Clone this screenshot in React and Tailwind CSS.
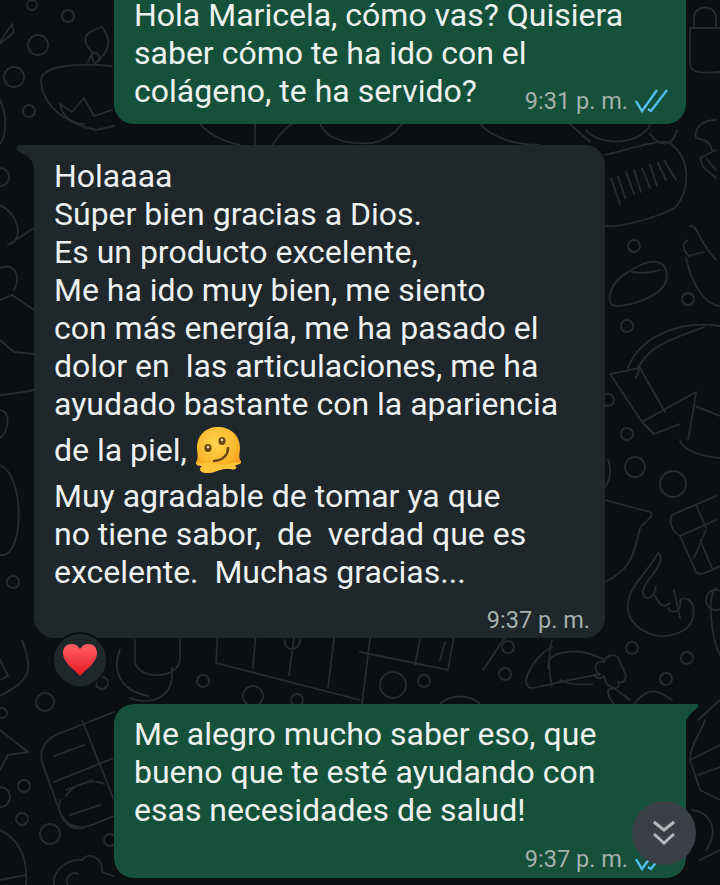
const rings = [
  [32, 5, 5], [38, 45, 10], [14, 77, 10], [68, 16, 6], [29, 111, 6], [0, 177, 9], [2, 713, 5],
  [45, 702, 9], [24, 786, 6], [22, 819, 6], [50, 834, 10], [0, 797, 10], [102, 683, 6], [13, 582, 6],
  [634, 246, 6], [688, 299, 6], [627, 326, 6], [608, 400, 6], [627, 434, 6], [635, 467, 10], [673, 484, 13],
  [632, 648, 6], [687, 658, 6], [666, 679, 6], [203, 681, 6], [253, 696, 10], [393, 685, 13], [424, 681, 6],
  [508, 647, 6], [505, 674, 6], [297, 700, 6], [716, 600, 10], [110, 840, 6],
];

const doodles = [
  // lamp, top left
  "M41 80C42 68 68 62 112 66M41 80C42 106 66 124 96 130L114 126",
  "M92 52C80 40 84 32 102 27C112 40 110 50 97 62C92 66 92 54 92 52Z M88 62C92 50 98 50 100 60",
  "M60 104L72 112M72 112L84 98L94 116M94 116L112 110M60 104C62 116 72 124 84 124",
  "M0 42L12 24L14 32L0 44",
  // left margin shapes
  "M0 100C8 116 6 136 0 144M0 205C20 215 24 240 8 245L34 228M0 268C18 262 20 280 14 290M0 300L12 295L34 310M0 340L14 352L34 354",
  "M0 395C12 394 24 392 34 390M0 410C12 412 8 432 0 438M0 465C26 476 24 560 0 555",
  "M22 640C34 672 30 680 0 696M0 660L8 676L0 680",
  // notebook, bottom left
  "M114 712L58 734C44 740 38 752 43 765L60 812C66 826 78 830 92 825L114 816M82 720L114 800M54 782L114 758M54 756L84 745M66 790L92 780M70 815L100 805",
  "M66 796C72 785 92 778 104 784M60 800C56 815 68 832 84 828M0 730L28 752L8 755L0 770",
  "M0 830C20 840 28 860 26 885M0 880L26 875",
  "M54 885C52 872 66 858 82 860C90 850 104 860 102 872L114 876M68 885C64 878 72 870 78 874",
  // gap between the first bubbles
  "M200 124C210 135 225 142 240 145M255 124V145M292 124C282 130 278 138 272 145M320 124C326 138 345 145 372 143C388 140 396 132 402 124",
  "M480 124C490 135 510 145 540 145M570 124L590 142",
  // comb and bowl, right margin
  "M605 155C620 152 660 138 670 143C692 160 690 190 675 208C655 218 620 228 605 226",
  "M611 178L620 204M618 176L625 198M626 172L634 194M634 170L641 192M642 168L650 188M650 165L657 186M658 163L666 180M664 160L676 180",
  "M586 130C600 147 640 145 650 125M650 134C660 147 672 148 677 130",
  "M703 167L700 158L716 150M703 167L716 178M706 158L716 170",
  "M612 305C606 298 612 284 622 276C640 264 652 258 662 264C670 272 668 284 658 292C644 302 622 308 612 305ZM632 272C644 274 652 272 660 270",
  // finger and flipper
  "M690 226C696 224 700 240 708 250L716 260M688 240C680 245 684 252 690 256M688 256L704 252M686 258C692 285 705 305 720 306",
  "M628 368C640 336 680 320 720 326M638 368C650 345 670 340 704 327M610 374L640 368L665 412M640 368L636 378M610 374L642 422L696 392M696 392C692 420 690 428 688 440M642 422L654 434L680 424M695 406L720 416",
  "M680 440C682 450 700 456 720 458",
  // shirt and rock hand
  "M605 500L650 512C656 516 644 522 640 528C634 556 630 570 605 582",
  "M608 460C612 470 610 480 605 487",
  "M658 553C654 562 642 574 632 590C622 612 630 625 650 634C668 640 690 632 693 618C696 600 686 596 680 600M658 553C664 556 660 566 650 578C640 590 642 598 648 598C654 596 654 594 656 586M655 596C660 606 664 608 670 603M668 608C672 615 682 612 680 600M674 590L680 618",
  // chocolate bar
  "M672 515L716 496M672 515C668 525 674 532 680 536L716 520M696 505L706 528M680 536L696 572C700 576 704 574 720 566M694 558L706 530M700 540L712 568",
  "M716 588C706 596 712 640 720 655",
  // cross and arm
  "M605 660C590 654 585 650 565 652C550 655 548 660 548 668M560 680C570 686 590 684 592 684M600 675C592 668 596 660 604 662C606 654 618 652 620 662C624 672 624 668 624 672C628 678 624 684 618 682C620 688 616 690 610 686C604 684 606 678 604 676C600 680 596 678 594 675",
  "M614 704C606 694 606 688 614 688L630 700M634 704C650 684 660 692 672 700",
  // keyboard strip
  "M218 630L216 663L360 700M256 630L253 668M295 630L289 675M335 630L328 688M371 630L362 704M455 630L448 670M510 630L483 670M285 640C283 652 300 652 300 640M420 640L415 665M445 642L440 660M360 652L448 670",
  "M135 640V660C135 680 178 680 180 660V640M172 668L172 674C172 700 148 705 130 698M120 650C112 668 118 690 148 696",
  "M552 647C540 652 528 670 526 680C526 688 530 690 542 686L570 680L600 674M552 640C548 655 548 670 552 686",
  "M440 704C450 694 470 694 480 704",
  // top-right and bottom-right shapes
  "M694 28V18C694 4 716 4 716 18V28M690 28H720M690 28V64C690 72 700 74 720 72",
  "M716 120C700 120 694 130 696 138C702 140 710 140 712 150",
  "M705 720C700 735 690 745 690 760L700 790L720 800M690 760L720 745M698 775L720 767",
  "M698 720L720 700M692 810C710 812 720 830 706 850",
  "M700 860L720 850",
];

function Doodles() {
  return (
    <svg className="absolute inset-0" width="720" height="885" viewBox="0 0 720 885" fill="none" stroke="#272b30" strokeWidth="1.8" strokeLinecap="round" strokeLinejoin="round">
      {doodles.map((d, i) => (
        <path key={i} d={d} />
      ))}
      {rings.map(([cx, cy, r], i) => (
        <circle key={i} cx={cx} cy={cy} r={r} />
      ))}
    </svg>
  );
}

function MeltingFace() {
  return (
    <svg width="48" height="48" viewBox="0 0 48 48" className="ml-[7px] shrink-0">
      <defs>
        <radialGradient id="face" cx="45%" cy="35%" r="70%">
          <stop offset="0%" stopColor="#ffd44f" />
          <stop offset="65%" stopColor="#fcb72b" />
          <stop offset="100%" stopColor="#ee8c16" />
        </radialGradient>
      </defs>
      <path d="M2 36C5 33 3 26 3 22C3 9 12 1 24 1C36 1 46 9 46 22C46 27 44 32 47 35C48 39 43 38 41 39C44 42 42 44 37 43C30 42 26 44 20 46C14 48 6 47 6 43C6 41 8 41 8 40C5 40 1 39 2 36Z" fill="url(#face)" />
      <path d="M3 36C10 40 14 34 22 38C30 41 38 35 47 36C46 39 42 38 41 40C44 43 40 44 36 43C30 42 26 44 20 46C14 48 6 47 6 43C7 41 8 41 8 40C5 40 1 39 3 36Z" fill="#fdc43a" />
      <ellipse cx="14" cy="22" rx="3.6" ry="4" fill="#6b4513" />
      <ellipse cx="28" cy="15" rx="3.6" ry="4" fill="#6b4513" />
      <circle cx="14" cy="21" r="1.3" fill="#f3d9a0" />
      <circle cx="28" cy="14" r="1.3" fill="#f3d9a0" />
      <path d="M34 22C34 29 29 34 20 35" fill="none" stroke="#6b4513" strokeWidth="2.6" strokeLinecap="round" />
    </svg>
  );
}

function Heart() {
  return (
    <svg width="36" height="34" viewBox="0 0 36 34">
      <defs>
        <linearGradient id="heart" x1="0" y1="0" x2="0" y2="1">
          <stop offset="0%" stopColor="#ff5f63" />
          <stop offset="100%" stopColor="#e8192c" />
        </linearGradient>
      </defs>
      <path d="M18 33C12 26 1 20 1 10C1 4 5 1 10 1C14 1 16 3 18 6C20 3 22 1 26 1C31 1 35 4 35 10C35 20 24 26 18 33Z" fill="url(#heart)" />
    </svg>
  );
}

function Ticks() {
  return (
    <svg width="34" height="26" viewBox="0 0 34 26" fill="none" stroke="#53bdeb" strokeWidth="2.4" className="shrink-0">
      <path d="M1 13L7 23L22 2" />
      <path d="M13 21L16 23L32 2" />
    </svg>
  );
}

function Time({ children }) {
  return <span className="text-[23.5px] leading-[24px] text-[#a5b0ac] whitespace-pre">{children}</span>;
}

export default function App() {
  return (
    <div className="relative w-[720px] h-[885px] overflow-hidden bg-[#0b0f12] font-['Roboto',sans-serif] text-[32px] leading-[38px] text-[#eef1f0]">
      <Doodles />
      <div className="relative flex flex-col">
        <div className="ml-[114px] w-[572px] h-[144px] -mt-[20px] shrink-0 rounded-[20px] bg-[#15513a] pl-[20px] pr-[17px] pt-[16px]">
          <p>Hola Maricela, cómo vas? Quisiera</p>
          <p>saber cómo te ha ido con el</p>
          <div className="flex items-end justify-between">
            <p>colágeno, te ha servido?</p>
            <div className="flex items-center gap-[7px] -mb-[4px]">
              <Time>9:31 p. m.</Time>
              <Ticks />
            </div>
          </div>
        </div>

        <div className="relative ml-[34px] mt-[21px] w-[571px] h-[493px] rounded-r-[20px] rounded-bl-[20px] bg-[#1f272b] pl-[20px] pt-[12px]">
          <svg className="absolute -left-[18px] top-0" width="20" height="24" viewBox="0 0 20 24">
            <path d="M20 0H4C0 0-1 5 3 7C12 10 17 15 18 24H20Z" fill="#1f272b" />
          </svg>
          <p>Holaaaa</p>
          <p>Súper bien gracias a Dios.</p>
          <p>Es un producto excelente,</p>
          <p>Me ha ido muy bien, me siento</p>
          <p>con más energía, me ha pasado el</p>
          <p className="whitespace-pre">dolor en  las articulaciones, me ha</p>
          <p>ayudado bastante con la apariencia</p>
          <div className="flex h-[54px] items-center">
            <p>de la piel,</p>
            <MeltingFace />
          </div>
          <p>Muy agradable de tomar ya que</p>
          <p className="whitespace-pre">no tiene sabor,  de  verdad que es</p>
          <p className="whitespace-pre">excelente.  Muchas gracias...</p>
          <div className="mt-[17px] flex justify-end pr-[15px]">
            <Time>9:37 p. m.</Time>
          </div>
        </div>

        <div className="relative ml-[52px] -mt-[6px] flex size-[56px] items-center justify-center rounded-full border-2 border-[#0b0f12] bg-[#1f272b]">
          <Heart />
        </div>

        <div className="relative ml-[114px] mt-[16px] h-[174px] w-[572px] rounded-l-[20px] rounded-br-[20px] bg-[#15513a] pl-[20px] pt-[11px]">
          <svg className="absolute -right-[13px] top-0" width="14" height="20" viewBox="0 0 14 20">
            <path d="M0 0H12C14 0 14 2 13 3C6 9 2 13 0 20Z" fill="#15513a" />
          </svg>
          <p>Me alegro mucho saber eso, que</p>
          <p>bueno que te esté ayudando con</p>
          <p>esas necesidades de salud!</p>
          <div className="mt-[17px] flex items-center gap-[7px] justify-end pr-[17px]">
            <Time>9:37 p. m.</Time>
            <Ticks />
          </div>
          <div className="absolute -right-[10px] bottom-[13px] flex size-[64px] items-center justify-center rounded-full bg-[#3a3f46]">
            <svg width="24" height="26" viewBox="0 0 24 26" fill="none" stroke="#b4b8bb" strokeWidth="3">
              <path d="M2 2L12 10L22 2" />
              <path d="M2 14L12 23L22 14" />
            </svg>
          </div>
        </div>
      </div>
    </div>
  );
}
